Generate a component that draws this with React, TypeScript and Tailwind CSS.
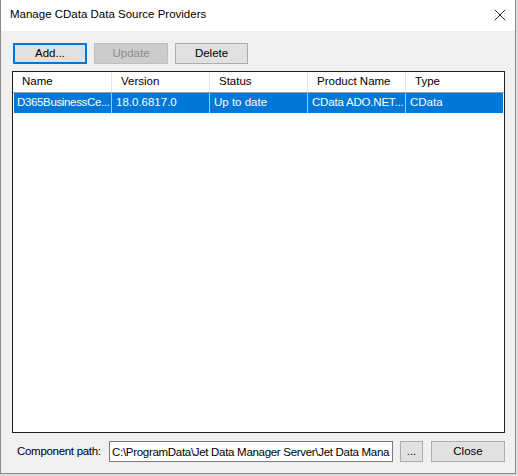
import { X } from 'lucide-react';

const columns = ['Name', 'Version', 'Status', 'Product Name', 'Type'];

const providers = [
  {
    name: 'D365BusinessCe...',
    version: '18.0.6817.0',
    status: 'Up to date',
    product: 'CData ADO.NET...',
    type: 'CData',
  },
];

function WinButton({
  label,
  width = 'w-[74px]',
  variant = 'normal',
}: {
  label: string;
  width?: string;
  variant?: 'normal' | 'default' | 'disabled';
}) {
  const look =
    variant === 'default'
      ? 'border-2 border-[#0078d7] bg-[#e1e1e1] text-black'
      : variant === 'disabled'
        ? 'border border-[#bfbfbf] bg-[#cccccc] text-[#8d8d8d]'
        : 'border border-[#adadad] bg-[#e1e1e1] text-black';
  return (
    <button
      className={`flex h-[21px] ${width} items-center justify-center text-[11.5px] leading-none ${look}`}
      disabled={variant === 'disabled'}
    >
      {label}
    </button>
  );
}

export default function App() {
  return (
    <div
      className="flex h-[476px] w-[518px] bg-[#dcdcdc]"
      style={{ fontFamily: '"Liberation Sans", Arial, sans-serif' }}
    >
      {/* Dialog window */}
      <div className="flex h-[474px] w-[516px] flex-col border-x border-b border-[#8a8a8a]">
        {/* Title bar */}
        <div className="flex h-[31px] items-center justify-between bg-white pb-[2px] pl-[9px] pr-[5px]">
          <span className="text-[11.5px] text-black">Manage CData Data Source Providers</span>
          <X className="h-[20px] w-[20px] text-black" strokeWidth={1} />
        </div>

        {/* Body */}
        <div className="flex flex-1 flex-col bg-[#f0f0f0] pl-[11px] pt-[12px]">
          {/* Toolbar */}
          <div className="ml-[1px] flex gap-[7px]">
            <WinButton label="Add..." variant="default" />
            <WinButton label="Update" variant="disabled" />
            <WinButton label="Delete" width="w-[73px]" />
          </div>

          {/* Provider list */}
          <div className="mt-[7px] h-[362px] w-[493px] border border-[#1e1e1e] bg-white text-[11.5px]">
            <div className="flex h-[21px] border-b border-[#a0a0a0]">
              {columns.map((c, i) => (
                <div
                  key={c}
                  className={`flex items-center whitespace-nowrap pl-[9px] text-black ${
                    i < columns.length - 1 ? 'border-r border-[#e5e5e5]' : 'flex-1'
                  } ${i === 0 ? 'w-[99px]' : i < columns.length - 1 ? 'w-[98px]' : ''}`}
                >
                  {c}
                </div>
              ))}
            </div>
            {providers.map((p) => (
              <div key={p.name} className="mx-[1px] flex h-[20px] bg-[#0078d7] text-white">
                {[p.name, p.version, p.status, p.product, p.type].map((v, i) => (
                  <div
                    key={i}
                    className={`flex items-center overflow-hidden whitespace-nowrap ${
                      i < 4 ? 'w-[98px] shrink-0 border-r border-[#9cc7ee]' : 'flex-1'
                    } ${i === 0 ? 'pl-[3px] tracking-[-0.35px]' : 'pl-[4px]'} ${
                      i === 3 ? 'tracking-[-0.2px]' : ''
                    }`}
                  >
                    {v}
                  </div>
                ))}
              </div>
            ))}
          </div>

          {/* Component path */}
          <div className="mt-[8px] flex h-[21px] items-center text-[11.5px]">
            <span className="ml-[5px] w-[92px] shrink-0 whitespace-nowrap tracking-[-0.3px] text-black">
              Component path:
            </span>
            <div className="h-[21px] w-[284px] shrink-0 overflow-hidden border border-[#7a7a7a] bg-white pl-[2px] text-black">
              <span className="block whitespace-nowrap pt-[2px] tracking-[-0.3px]">
                {'C:\\ProgramData\\Jet Data Manager Server\\Jet Data Mana'}
              </span>
            </div>
            <div className="ml-[7px] shrink-0">
              <WinButton label="..." width="w-[23px]" />
            </div>
            <div className="ml-[8px] shrink-0">
              <WinButton label="Close" />
            </div>
          </div>
        </div>
      </div>
    </div>
  );
}
